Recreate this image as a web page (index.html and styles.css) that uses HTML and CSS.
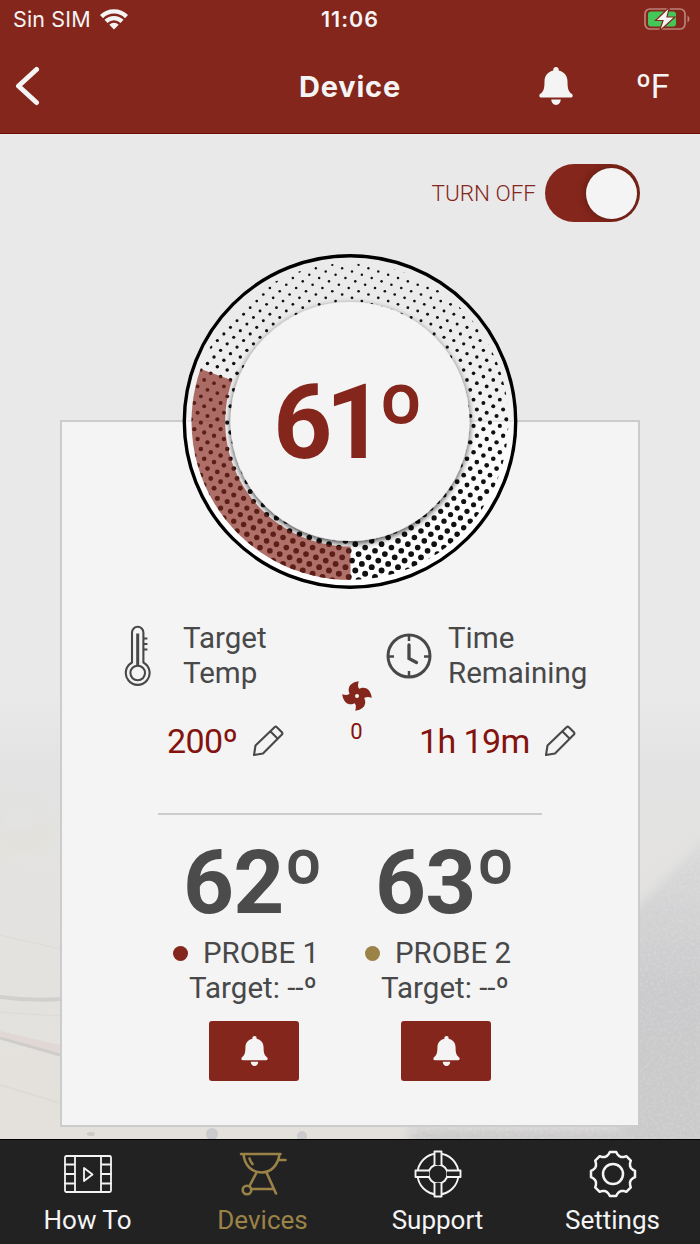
FILE: index.html
```
<!DOCTYPE html>
<html lang="en">
<head>
    <meta charset="UTF-8">
    <meta name="viewport" content="width=device-width, initial-scale=1.0">
    <title>Device</title>
    <link rel="stylesheet" href="styles.css">
</head>
<body>
    <svg class="defs" width="0" height="0">
        <symbol id="bell" viewBox="0 0 34 38">
            <path d="M17 0c1.7 0 2.7 1 2.7 2.6v.9c5.3 1.2 8.8 5 8.8 10.9 0 7.600 1.100 10 4.500 12.700 1.300 1.300.7 3.500-1.200 3.500H2.200C.3 30.600-.3 28.400 1 27.100c3.400-2.700 4.500-5.100 4.500-12.700C5.500 8.500 9 4.700 14.300 3.500v-.9C14.300 1 15.300 0 17 0z"/>
            <path d="M12.300 32.600h9.400c0 3-2 5.400-4.700 5.400s-4.700-2.400-4.700-5.400z"/>
        </symbol>
        <symbol id="pencil" viewBox="0 0 32 32">
            <path d="M2 30l1.500-9.500L22.500 2.200q1.200-1 2.400 0l5 5q1 1.200 0 2.400L11 28.500zM18.500 6.500l7 7"/>
        </symbol>
    </svg>

    <header>
        <div class="status">
            <div class="carrier">
                Sin SIM
                <svg width="28" height="21" viewBox="0 0 28 21">
                    <path d="M1.500 7.600a17.800 17.800 0 0 1 25 0M6 12.400a11.400 11.400 0 0 1 16 0" fill="none" stroke="#f4f4f4" stroke-width="4.300"/>
                    <path d="M14 20.500l-4.700-4.700a6.700 6.700 0 0 1 9.400 0z" fill="#f4f4f4"/>
                </svg>
            </div>
            <div class="clock">11:06</div>
            <svg class="battery" width="46" height="24" viewBox="0 0 46 24">
                <rect x="1" y="2" width="40" height="20" rx="5" fill="none" stroke="#bb8178" stroke-width="1.700"/>
                <path d="M43.500 8.500q2 1 2 3.500t-2 3.500z" fill="#bb8178"/>
                <rect x="4" y="4.500" width="28" height="15" rx="3" fill="#43c759"/>
                <path d="M25.500 0L11.500 13.500h7.500L15.500 24 31 10h-8z" fill="#f4f4f4" stroke="#84261b" stroke-width="1.200"/>
            </svg>
        </div>
        <div class="navbar">
            <svg class="back" width="26" height="42" viewBox="0 0 26 42">
                <path d="M22.500 4.500L4.500 21l18 16.500" fill="none" stroke="#f4f4f4" stroke-width="5" stroke-linecap="round" stroke-linejoin="round"/>
            </svg>
            <h1>Device</h1>
            <div class="actions">
                <svg class="bell" width="34" height="38"><use href="#bell"/></svg>
                <span>ºF</span>
            </div>
        </div>
    </header>

    <main>
        <svg class="backdrop" viewBox="0 0 700 439" preserveAspectRatio="none">
            <defs>
                <linearGradient id="fade" x1="0" y1="0" x2="0" y2="1">
                    <stop offset="0" stop-color="#e9e9e9"/>
                    <stop offset=".15" stop-color="#e3e3e3"/>
                    <stop offset="1" stop-color="#e4e1dc"/>
                </linearGradient>
                <linearGradient id="coal" x1="0" y1="0" x2="0" y2="1">
                    <stop offset="0" stop-color="#dadada"/>
                    <stop offset=".5" stop-color="#cacacc"/>
                    <stop offset="1" stop-color="#cacacb"/>
                </linearGradient>
                <filter id="soft"><feGaussianBlur stdDeviation="6"/></filter>
                <filter id="grain" x="0" y="0" width="100%" height="100%">
                    <feTurbulence type="fractalNoise" baseFrequency=".35" numOctaves="3" result="n"/>
                    <feColorMatrix in="n" values="0 0 0 0 1  0 0 0 0 1  0 0 0 0 1  1.200 0 0 0 -.5"/>
                    <feComposite in2="SourceGraphic" operator="in"/>
                </filter>
            </defs>
            <rect width="700" height="439" fill="url(#fade)"/>
            <g filter="url(#soft)">
                <path d="M620 225L710 135v320H410v-27h210z" fill="url(#coal)"/>
                <ellipse cx="18" cy="118" rx="24" ry="20" fill="none" stroke="#e0dfdc" stroke-width="5"/>
                <path d="M-5 146q40 0 65-25v10q-20 22-65 22z" fill="#e2e1d7"/>
            </g>
            <path d="M0 297q30 4 60 2" fill="none" stroke="#d2d0ce" stroke-width="4"/>
            <path d="M0 235l60 14M0 312l60 4" fill="none" stroke="#dcdad7" stroke-width="1"/>
            <path d="M0 331l60 14v9L0 336z" fill="#e1d7d4"/>
            <path d="M0 338l60 17" stroke="#cfcdcb" stroke-width="3"/>
            <path d="M0 385l60 18" stroke="#deDBd5" stroke-width="2"/>
            <ellipse cx="91" cy="434" rx="4" ry="2" fill="#cdcac9"/>
            <circle cx="212" cy="434" r="6" fill="#cbcacc"/>
            <circle cx="302" cy="436" r="5" fill="#cbcacc"/>
            <path d="M640 220L700 150v289H410l4-12h226z" filter="url(#grain)" opacity=".3"/>
        </svg>

        <div class="power">
            <span>TURN OFF</span>
            <div class="switch"><div class="knob"></div></div>
        </div>

        <div class="gauge">
            <svg width="336" height="336" viewBox="0 0 336 336">
                <defs>
                    <linearGradient id="ring" x1="0" y1="0" x2="0" y2="1">
                        <stop offset=".2" stop-color="#fff" stop-opacity=".1"/>
                        <stop offset=".85" stop-color="#fff" stop-opacity="1"/>
                    </linearGradient>
                    <clipPath id="band"><circle cx="168" cy="167.500" r="158.500"/></clipPath>
                    <filter id="drop" x="-10%" y="-10%" width="120%" height="125%">
                        <feDropShadow dx="0" dy="2.500" stdDeviation="3" flood-opacity=".75"/>
                    </filter>
                </defs>
                <circle cx="168" cy="167.500" r="164" fill="url(#ring)"/>
                <g id="dots" fill="#111" clip-path="url(#band)"></g>
                <circle cx="168" cy="167.500" r="119.500" fill="#f4f4f4" filter="url(#drop)"/>
                <path d="M168.500 326A158.500 158.500 0 0 1 18.500 115l31.700 11.200A125 125 0 0 0 168.500 292.500z" fill="#84261b" fill-opacity=".66"/>
                <circle cx="168" cy="167.500" r="165.700" fill="none" stroke="#000" stroke-width="3.400"/>
            </svg>
            <div class="reading">61º</div>
        </div>

        <section class="card">
            <div class="info">
                <div class="target">
                    <div class="heading">
                        <svg width="28" height="62" viewBox="0 0 28 62">
                            <g fill="none" stroke="#484849" stroke-width="2.100">
                                <path d="M8 37.500V7.500a5.700 5.700 0 0 1 11.400 0v30a11.900 11.900 0 1 1-11.400 0z"/>
                                <circle cx="13.700" cy="48" r="7.300"/>
                                <path d="M13.700 41V8.500" stroke-width="3"/>
                                <path d="M19.400 13.500h4M19.400 19h4M19.400 24.500h4"/>
                            </g>
                        </svg>
                        <p>Target<br>Temp</p>
                    </div>
                    <div class="value">
                        <span>200º</span>
                        <svg class="pencil" width="32" height="32"><use href="#pencil"/></svg>
                    </div>
                </div>
                <div class="fan">
                    <svg width="30" height="30" viewBox="-15 -15 30 30">
                        <g fill="#84261b">
                            <path id="blade" d="M-2 3C-10-1-12-13 1.800-14.800C.5-11 .8-8 3.500-6L4 1z"/>
                            <use href="#blade" transform="rotate(90)"/>
                            <use href="#blade" transform="rotate(180)"/>
                            <use href="#blade" transform="rotate(270)"/>
                        </g>
                        <circle r="2" fill="#f4f4f4"/>
                    </svg>
                    <span>0</span>
                </div>
                <div class="time">
                    <div class="heading">
                        <svg width="46" height="46" viewBox="0 0 46 46">
                            <circle cx="23" cy="23" r="21" fill="none" stroke="#484849" stroke-width="3"/>
                            <path d="M23 3v5M23 38v5M3 23.500h5M38 23.500h5" stroke="#484849" stroke-width="2.500"/>
                            <path d="M23 12v13.500l7.500 4" fill="none" stroke="#484849" stroke-width="3.300" stroke-linecap="round"/>
                        </svg>
                        <p>Time<br>Remaining</p>
                    </div>
                    <div class="value">
                        <span>1h 19m</span>
                        <svg class="pencil" width="32" height="32"><use href="#pencil"/></svg>
                    </div>
                </div>
            </div>

            <div class="probes">
                <div class="probe">
                    <div class="temp">62º</div>
                    <div class="name"><i class="dot red"></i>PROBE 1</div>
                    <div class="goal">Target: --º</div>
                    <button><svg class="bell" width="27" height="30"><use href="#bell"/></svg></button>
                </div>
                <div class="probe">
                    <div class="temp">63º</div>
                    <div class="name"><i class="dot gold"></i>PROBE 2</div>
                    <div class="goal">Target: --º</div>
                    <button><svg class="bell" width="27" height="30"><use href="#bell"/></svg></button>
                </div>
            </div>
        </section>
    </main>

    <nav class="tabs">
        <a class="tab">
            <svg width="48" height="48" viewBox="0 0 48 48">
                <g stroke-width="1.800">
                    <rect x="1" y="6" width="46" height="36" rx="1.500"/>
                    <path d="M11 6v36M37 6v36M1 14.500h10M1 24h10M1 33.500h10M37 14.500h10M37 24h10M37 33.500h10"/>
                    <path d="M20 18v13l8.500-6.500z"/>
                </g>
            </svg>
            How To
        </a>
        <a class="tab active">
            <svg width="48" height="48" viewBox="0 0 48 48">
                <g stroke-width="2.600">
                    <path d="M2 4h39.500M4.500 4c1 12 9 18.500 18 18.500S39 16 40.500 4M40 10h6.500"/>
                    <path d="M17.500 22.500L10.500 36M27.500 22.500l9.500 21M12 39h23"/>
                    <circle cx="8" cy="40" r="4.300"/>
                    <path d="M10.500 8.500q1 3.500 3 5.500" stroke-width="2.600"/>
                </g>
            </svg>
            Devices
        </a>
        <a class="tab">
            <svg width="48" height="48" viewBox="0 0 48 48">
                <g stroke-width="1.900">
                    <circle cx="24" cy="24" r="20.500"/>
                    <circle cx="24" cy="24" r="9.500"/>
                    <path d="M20.500 15v-13.500h7v13.500M20.500 33v13.500h7v-13.500M15 20.500h-13.500v6.500h13.500M33 20.500h13.500v6.500h-13.500" fill="#222"/>
                </g>
            </svg>
            Support
        </a>
        <a class="tab">
            <svg width="48" height="48" viewBox="-24 -24 48 48">
                <g stroke-width="2.500">
                    <path d="M-6.200-17.800L-4.200-20-3.200-22 3.200-22 4.200-20 6.200-17.800 8.200-17 11.200-17.100 13.300-17.800 17.800-13.300 17.100-11.200 17-8.200 17.800-6.200 20-4.200 22-3.200 22 3.200 20 4.200 17.800 6.200 17 8.200 17.100 11.200 17.800 13.300 13.300 17.800 11.200 17.100 8.200 17 6.200 17.800 4.200 20 3.200 22-3.200 22-4.200 20-6.200 17.800-8.200 17-11.200 17.100-13.300 17.800-17.800 13.300-17.100 11.200-17 8.200-17.800 6.200-20 4.200-22 3.200-22-3.200-20-4.200-17.800-6.200-17-8.200-17.100-11.200-17.800-13.300-13.300-17.800-11.200-17.100-8.200-17z"/>
                    <circle r="10"/>
                </g>
            </svg>
            Settings
        </a>
    </nav>

    <script>
        // halftone pattern of the gauge ring, dots get bigger towards the bottom
        const dots = document.getElementById('dots')
        const unit = 3.285

        for (let m = -40; m <= 70; m++) {
            for (let n = -40; n <= 70; n++) {
                const x = 127.3 + (3 * m + n) * unit
                const y = 20.8 + (m + 3 * n) * unit
                const d = Math.hypot(x - 168, y - 167.5)
                if (d < 115 || d > 161) continue

                const dot = document.createElementNS('http://www.w3.org/2000/svg', 'circle')
                dot.setAttribute('cx', x.toFixed(2))
                dot.setAttribute('cy', y.toFixed(2))
                dot.setAttribute('r', (1.1 + y * 0.0059).toFixed(2))
                dots.appendChild(dot)
            }
        }
    </script>
</body>
</html>
```
FILE: styles.css
```
* {
    box-sizing: border-box;
}

body {
    margin: 0;
    width: 700px;
    height: 1244px;
    display: flex;
    flex-direction: column;
    overflow: hidden;
    font-family: Roboto, sans-serif;
    color: #484849;
    background: #e9e9e9;
}

svg {
    display: block;
    flex: none;
}

.defs {
    position: absolute;
}

header {
    height: 134px;
    background: #84261b;
    border-bottom: 1px solid #6f0d06;
    color: #f4f4f4;
}

.status {
    height: 38px;
    display: grid;
    grid-template-columns: 1fr 100px 1fr;
    align-items: center;
    padding: 0 10px 0 13px;
    font: 21.5px/38px Inter, sans-serif;
}

.carrier {
    display: flex;
    align-items: center;
    gap: 9px;
    letter-spacing: .15px;
}

.clock {
    padding-right: 3px;
    text-align: center;
    font-weight: 600;
    letter-spacing: 1px;
}

.battery {
    justify-self: end;
}

.navbar {
    height: 95px;
    display: grid;
    grid-template-columns: 1fr 120px 1fr;
    align-items: center;
    padding: 0 31px;
}

.back {
    margin-left: -17px;
}

h1 {
    margin: 0;
    padding-top: 2px;
    text-align: center;
    font: 700 29px/40px Inter, sans-serif;
    letter-spacing: .8px;
}

.actions {
    display: flex;
    justify-content: flex-end;
    align-items: center;
    gap: 63px;
    font-size: 34px;
    letter-spacing: -.5px;
}

.bell {
    fill: #f4f4f4;
}

main {
    position: relative;
    height: 1005px;
    padding-top: 30px;
}

.backdrop {
    position: absolute;
    left: 0;
    bottom: 0;
    width: 700px;
    height: 439px;
}

.power {
    position: relative;
    height: 58px;
    display: flex;
    justify-content: flex-end;
    align-items: center;
    gap: 9px;
    padding-right: 60px;
    color: #84261b;
    font-size: 22.5px;
    font-weight: 300;
}

.switch {
    width: 95px;
    height: 58px;
    border-radius: 29px;
    background: #84261b;
    padding: 4px 3px;
    display: flex;
    justify-content: flex-end;
    overflow: hidden;
}

.knob {
    width: 51px;
    height: 51px;
    border-radius: 50%;
    background: #f4f4f4;
    box-shadow: 0 0 8px rgba(0, 0, 0, .35);
}

.gauge {
    position: relative;
    z-index: 1;
    width: 336px;
    height: 336px;
    margin: 32px auto -170px;
    display: grid;
}

.gauge svg,
.reading {
    grid-area: 1 / 1;
}

.reading {
    z-index: 1;
    place-self: center;
    padding-right: 9px;
    color: #84261b;
    font-size: 103px;
    font-weight: 700;
    line-height: 1;
    letter-spacing: -7px;
}

.card {
    position: relative;
    width: 580px;
    height: 707px;
    margin: 0 auto;
    padding-top: 199px;
    background: #f4f4f4;
    border: 2px solid #cbcccc;
}

.info {
    height: 192px;
    display: grid;
    grid-template-columns: 262px 65px 1fr;
}

.heading {
    height: 70px;
    display: flex;
    align-items: center;
}

.heading p {
    margin: 0;
    font-size: 29.5px;
    line-height: 35px;
}

.target .heading {
    padding-left: 62px;
    gap: 31px;
}

.time .heading {
    margin-left: -3px;
    gap: 16px;
}

.value {
    display: flex;
    justify-content: space-between;
    align-items: center;
    height: 50px;
    margin-top: 25px;
    color: #84130e;
    font-size: 34px;
    letter-spacing: -.6px;
}

.target .value {
    padding-left: 105px;
    padding-right: 40px;
}

.time .value {
    padding-left: 30px;
    padding-right: 62px;
}

.pencil {
    fill: none;
    stroke: #484849;
    stroke-width: 2.1px;
    stroke-linejoin: round;
}

.fan {
    display: flex;
    flex-direction: column;
    align-items: center;
    gap: 8px;
    padding-top: 60px;
    color: #84130e;
    font-size: 22px;
    line-height: 26px;
}

.probes {
    width: 384px;
    margin: 0 auto;
    padding-top: 24px;
    border-top: 2px solid #cbcccc;
    display: grid;
    grid-template-columns: 1fr 1fr;
}

.probe {
    display: flex;
    flex-direction: column;
    align-items: center;
}

.temp {
    height: 97px;
    padding-right: 2px;
    font-size: 89px;
    font-weight: 700;
    line-height: 88px;
    letter-spacing: -1px;
    color: #4b4b4b;
}

.name,
.goal {
    display: flex;
    align-items: center;
    font-size: 29.5px;
    line-height: 35px;
}

.name {
    gap: 15px;
    margin-right: 16px;
}

.goal {
    margin-bottom: 15px;
    padding-right: 2px;
}

.dot {
    width: 15px;
    height: 15px;
    border-radius: 50%;
}

.red {
    background: #84261b;
}

.gold {
    background: #9b8347;
}

button {
    width: 90px;
    height: 60px;
    padding: 0;
    border: 0;
    border-radius: 3px;
    background: #84261b;
    display: flex;
    align-items: center;
    justify-content: center;
}

.tabs {
    height: 105px;
    background: #222;
    border-top: 1px solid #000;
    display: grid;
    grid-template-columns: repeat(4, 1fr);
}

.tab {
    display: flex;
    flex-direction: column;
    align-items: center;
    padding-top: 10px;
    gap: 7px;
    color: #f4f4f4;
    font-size: 26px;
    line-height: 30px;
}

.tab g {
    fill: none;
    stroke: currentColor;
    stroke-linecap: round;
    stroke-linejoin: round;
}

.active {
    color: #9b8347;
}
```
